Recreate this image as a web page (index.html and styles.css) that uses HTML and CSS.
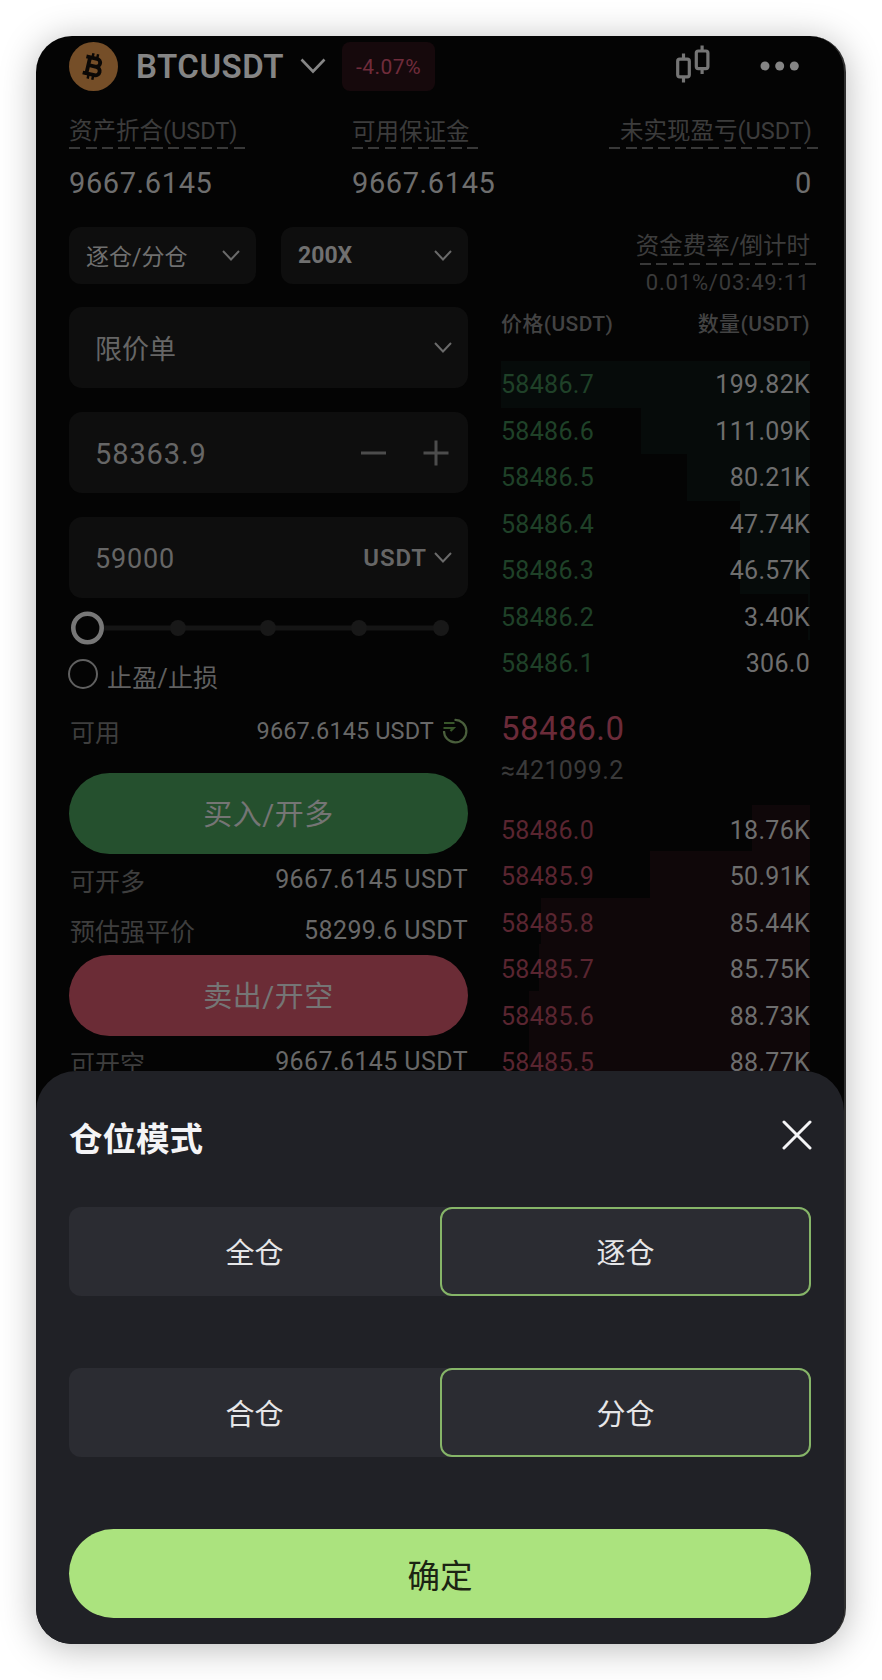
FILE: index.html
```html
<!DOCTYPE html>
<html lang="zh-CN">
<head>
    <meta charset="UTF-8">
    <meta name="viewport" content="width=device-width, initial-scale=1.0">
    <title>BTCUSDT - 仓位模式</title>
    <link rel="stylesheet" href="styles.css">
</head>
<body>
<div class="phone">

    <!-- 交易页面（变暗） -->
    <div class="trade">
        <div class="header">
            <svg class="coin" viewBox="0 0 48 48">
                <circle cx="24" cy="24" r="24" fill="#754e28"/>
                <g transform="rotate(13 24 24) translate(2 1.500) scale(.93)" fill="none" stroke="#0b0806" stroke-width="4">
                    <path d="M18 15.500V33M14 15.500h11.500a4.200 4.200 0 0 1 0 8.400H18M25.500 23.900h1.200a4.500 4.500 0 0 1 0 9H14"/>
                    <path d="M20.500 10.500v5M25.500 10.500v5M20.500 33v5M25.500 33v5" stroke-width="2.600"/>
                </g>
            </svg>
            <span class="pair">BTCUSDT</span>
            <svg class="pair-arrow" viewBox="0 0 26 16"><path d="M1.500 1.500L13 13.500L24.500 1.500"/></svg>
            <span class="change">-4.07%</span>
            <svg class="candle" viewBox="0 0 36 40">
                <rect x="2.700" y="14.200" width="11.600" height="17.600" rx="2"/>
                <rect x="21.300" y="6" width="11.600" height="17.600" rx="2"/>
                <path d="M8.500 8.500v5M8.500 32.500v5M27.100 .5v5M27.100 24v5"/>
            </svg>
            <svg class="more" viewBox="0 0 40 10">
                <circle cx="5" cy="5" r="4.500"/><circle cx="19.700" cy="5" r="4.500"/><circle cx="34.300" cy="5" r="4.500"/>
            </svg>
        </div>

        <div class="stats">
            <div class="stat">
                <div class="label dash">资产折合(USDT)</div>
                <div class="value">9667.6145</div>
            </div>
            <div class="stat stat-mid">
                <div class="label dash">可用保证金</div>
                <div class="value">9667.6145</div>
            </div>
            <div class="stat stat-right">
                <div class="label dash">未实现盈亏(USDT)</div>
                <div class="value">0</div>
            </div>
        </div>

        <div class="columns">
            <!-- 下单区 -->
            <div class="order">
                <div class="selects">
                    <div class="select"><span>逐仓/分仓</span><svg class="arrow" viewBox="0 0 18 11"><path d="M1 1l8 8.500L17 1"/></svg></div>
                    <div class="select"><b>200X</b><svg class="arrow" viewBox="0 0 18 11"><path d="M1 1l8 8.500L17 1"/></svg></div>
                </div>
                <div class="field">
                    <span class="type">限价单</span>
                    <svg class="arrow" viewBox="0 0 18 11"><path d="M1 1l8 8.500L17 1"/></svg>
                </div>
                <div class="field">
                    <span class="price">58363.9</span>
                    <svg class="step" viewBox="0 0 88 26"><path d="M0 13h25M62.500 13h25M75 .5v25"/></svg>
                </div>
                <div class="field">
                    <span class="amount">59000</span>
                    <b class="unit">USDT</b>
                    <svg class="arrow" viewBox="0 0 18 11"><path d="M1 1l8 8.500L17 1"/></svg>
                </div>

                <svg class="slider" viewBox="0 0 398 36">
                    <path d="M35 18h337" stroke="#151515" stroke-width="5"/>
                    <g fill="#181818">
                        <circle cx="109" cy="18" r="8"/><circle cx="199" cy="18" r="8"/>
                        <circle cx="290" cy="18" r="8"/><circle cx="372" cy="18" r="8"/>
                    </g>
                    <circle cx="18.500" cy="18" r="14.200" fill="none" stroke="#777" stroke-width="4.600"/>
                </svg>

                <div class="tpsl"><i class="radio"></i><span>止盈/止损</span></div>

                <div class="info info-avail">
                    <span class="name">可用</span>
                    <span class="num">9667.6145 USDT</span>
                    <svg class="transfer" viewBox="0 0 26 26">
                        <path d="M12.500 2a11.200 11.200 0 1 1-10.500 11" stroke="#4a5f3c"/>
                        <path d="M2 5h10.500M1.500 10h10L8.500 13" stroke="#38562a"/>
                    </svg>
                </div>
                <div class="btn buy">买入/开多</div>
                <div class="info"><span class="name">可开多</span><span class="num">9667.6145 USDT</span></div>
                <div class="info info-liq"><span class="name">预估强平价</span><span class="num">58299.6 USDT</span></div>
                <div class="btn sell">卖出/开空</div>
                <div class="info"><span class="name">可开空</span><span class="num">9667.6145 USDT</span></div>
            </div>

            <!-- 盘口 -->
            <div class="book">
                <div class="rate">
                    <div class="label dash">资金费率/倒计时</div>
                    <div class="countdown">0.01%/03:49:11</div>
                </div>
                <div class="book-head"><span>价格(USDT)</span><span>数量(USDT)</span></div>
                <div class="rows green">
                    <div class="row" style="--w: 309px"><span>58486.7</span><em>199.82K</em></div>
                    <div class="row" style="--w: 169px"><span>58486.6</span><em>111.09K</em></div>
                    <div class="row" style="--w: 123px"><span>58486.5</span><em>80.21K</em></div>
                    <div class="row" style="--w: 70px"><span>58486.4</span><em>47.74K</em></div>
                    <div class="row" style="--w: 70px"><span>58486.3</span><em>46.57K</em></div>
                    <div class="row" style="--w: 2px"><span>58486.2</span><em>3.40K</em></div>
                    <div class="row" style="--w: 0px"><span>58486.1</span><em>306.0</em></div>
                </div>
                <div class="last">58486.0</div>
                <div class="cny">≈421099.2</div>
                <div class="rows red">
                    <div class="row" style="--w: 58px"><span>58486.0</span><em>18.76K</em></div>
                    <div class="row" style="--w: 160px"><span>58485.9</span><em>50.91K</em></div>
                    <div class="row" style="--w: 269px"><span>58485.8</span><em>85.44K</em></div>
                    <div class="row" style="--w: 271px"><span>58485.7</span><em>85.75K</em></div>
                    <div class="row" style="--w: 281px"><span>58485.6</span><em>88.73K</em></div>
                    <div class="row" style="--w: 281px"><span>58485.5</span><em>88.77K</em></div>
                </div>
            </div>
        </div>
    </div>

    <!-- 仓位模式弹窗 -->
    <div class="sheet">
        <div class="sheet-head">
            <h2>仓位模式</h2>
            <svg class="close" viewBox="0 0 30 30"><path d="M2 2l26 26M28 2L2 28"/></svg>
        </div>
        <div class="segment"><div class="option">全仓</div><div class="option active">逐仓</div></div>
        <div class="segment"><div class="option">合仓</div><div class="option active">分仓</div></div>
        <div class="confirm">确定</div>
    </div>

</div>
</body>
</html>
```
FILE: styles.css
```css
* {
    box-sizing: border-box;
}

body {
    margin: 0;
    padding: 36px;
    background: #fff;
    font-family: Roboto, "Noto Sans CJK SC", sans-serif;
}

svg {
    display: block;
    flex-shrink: 0;
    fill: none;
}

.phone {
    width: 810px;
    height: 1608px;
    border-right: 2px solid #303030;
    border-radius: 36px;
    background: #040404;
    overflow: hidden;
    box-shadow: 0 4px 36px rgba(0, 0, 0, 0.28);
}

/* 交易页面 */
.trade {
    height: 1035px;
    padding: 0 34px 0 33px;
    overflow: hidden;
    color: #707070;
}

.header {
    display: flex;
    align-items: center;
    height: 60px;
}

.coin {
    width: 49px;
    height: 49px;
}

.pair {
    width: 164px;
    margin-left: 18px;
    font-size: 33px;
    font-weight: 600;
    letter-spacing: 0.5px;
    color: #858585;
}

.pair-arrow {
    width: 26px;
    height: 16px;
    stroke: #858585;
    stroke-width: 2.6;
}

.change {
    width: 93px;
    margin-left: 16px;
    border-radius: 8px;
    background: #16090c;
    font-size: 21px;
    line-height: 48px;
    padding-top: 1px;
    text-align: center;
    letter-spacing: 0.5px;
    color: #702c3b;
}

.candle {
    width: 36px;
    height: 40px;
    margin: -2px 49px 0 auto;
    stroke: #757575;
    stroke-width: 3.2;
}

.more {
    width: 40px;
    height: 10px;
    margin-right: 10px;
    fill: #858585;
}

.stats {
    display: flex;
    height: 131px;
    padding-top: 19px;
}

.stat {
    flex-shrink: 0;
    width: 283px;
}

.stat-right {
    width: 177px;
}

.label {
    height: 34px;
    font-size: 23.5px;
    line-height: 32px;
    white-space: nowrap;
    color: #3c3c3c;
}

/* 虚线下划线 */
.dash {
    width: 177px;
    background: repeating-linear-gradient(to right, #383838 0 11px, transparent 11px 16.500px) left bottom / 100% 2px no-repeat;
}

.stat-mid .dash {
    width: 126px;
    padding-top: 1px;
}

.stat-right .dash {
    width: 210px;
    margin-left: -26px;
    padding-right: 7px;
    text-align: right;
}

.value {
    margin-top: 16px;
    font-size: 29px;
    line-height: 36px;
    letter-spacing: 0.6px;
    color: #6e6e6e;
}

.stat-right .value {
    text-align: right;
}

.columns {
    display: flex;
    justify-content: space-between;
}

/* 下单区 */
.order {
    width: 399px;
}

.selects {
    display: flex;
    justify-content: space-between;
    margin-bottom: 23px;
}

.select {
    display: flex;
    align-items: center;
    justify-content: space-between;
    width: 187px;
    height: 57px;
    padding: 0 16px 0 17px;
    border-radius: 12px;
    background: #0e0e0e;
    font-size: 23px;
}

.select span {
    margin-top: -2px;
}

.arrow {
    width: 18px;
    height: 11px;
    stroke: #6a6a6a;
    stroke-width: 2;
}

.field {
    display: flex;
    align-items: center;
    height: 81px;
    margin-bottom: 24px;
    padding: 0 16px 0 26px;
    border-radius: 13px;
    background: #0e0e0e;
    color: #666;
}

.field span {
    flex: 1;
}

.type {
    font-size: 27px;
}

.price {
    padding-top: 2px;
    font-size: 29px;
    letter-spacing: 0.9px;
}

.amount {
    padding-top: 2px;
    font-size: 27px;
    letter-spacing: 0.8px;
}

.unit {
    margin-right: 7px;
    font-size: 24px;
    font-weight: 600;
    letter-spacing: 0.9px;
}

.step {
    width: 88px;
    height: 26px;
    margin-right: 3px;
    stroke: #4c4c4c;
    stroke-width: 3;
}

.slider {
    width: 398px;
    height: 36px;
    margin-top: -12px;
}

.tpsl {
    display: flex;
    align-items: center;
    height: 60px;
    font-size: 25px;
    letter-spacing: 0.2px;
    color: #606060;
}

.radio {
    width: 30px;
    height: 30px;
    margin: -4px 9px 0 -1px;
    border: 2px solid #606060;
    border-radius: 50%;
}

.info {
    display: flex;
    justify-content: space-between;
    align-items: center;
    height: 51px;
    font-size: 25px;
}

.name {
    flex: 1;
    padding-left: 1px;
    font-size: 25px;
    color: #3e3e3e;
}

.num {
    letter-spacing: 0.4px;
    color: #686868;
}

.info-avail {
    height: 67px;
    padding-bottom: 17px;
}

.info-liq {
    height: 50px;
}

.info-avail .num {
    font-size: 23.500px;
    letter-spacing: 0.1px;
}

.transfer {
    width: 26px;
    height: 26px;
    margin-left: 8px;
    stroke-width: 2.2;
}

.btn {
    height: 81px;
    border-radius: 41px;
    font-size: 29px;
    line-height: 85px;
    text-align: center;
    letter-spacing: 0.5px;
    color: #757575;
}

.buy {
    background: #25502e;
}

.sell {
    background: #6b2c36;
}

/* 盘口 */
.book {
    width: 309px;
}

.rate {
    height: 77px;
    text-align: right;
}

.rate .label {
    height: 38px;
    margin-left: 139px;
    padding-right: 7px;
    line-height: 38px;
    direction: rtl;
}

.countdown {
    font-size: 22px;
    line-height: 36px;
    letter-spacing: 0.8px;
    color: #3a3a3a;
}

.book-head {
    display: flex;
    justify-content: space-between;
    height: 57px;
    font-size: 21px;
    font-weight: 500;
    line-height: 41px;
    letter-spacing: 0.4px;
    color: #434343;
}

.row {
    display: flex;
    justify-content: space-between;
    height: 46.500px;
    font-size: 25px;
    line-height: 47px;
    letter-spacing: 0.3px;
    background: linear-gradient(var(--bar), var(--bar)) right top / var(--w) 100% no-repeat;
}

.row em {
    font-style: normal;
    color: #6e6e6e;
}

.green {
    --bar: #060b0a;
    color: #1f4128;
}

.red {
    --bar: #0f0709;
    color: #5a2530;
}

.red .row {
    line-height: 52px;
}

.last {
    margin-top: 20px;
    font-size: 33px;
    line-height: 44px;
    letter-spacing: 0.5px;
    color: #6b2b39;
}

.cny {
    height: 54px;
    font-size: 25px;
    line-height: 40px;
    letter-spacing: 0.4px;
    color: #3a3a3a;
}

/* 弹窗 */
.sheet {
    height: 573px;
    padding: 0 33px;
    border-radius: 40px 40px 0 0;
    background: #202126;
    color: #e6e6e8;
}

.sheet-head {
    display: flex;
    justify-content: space-between;
    align-items: center;
    height: 136px;
    padding-bottom: 5px;
}

.sheet-head h2 {
    margin: 0;
    font-size: 33.500px;
    font-weight: 700;
    color: #f4f4f6;
}

.close {
    width: 30px;
    height: 30px;
    margin: 0 -1px 3px 0;
    stroke: #f4f4f6;
    stroke-width: 3;
    stroke-linecap: round;
}

.segment {
    display: flex;
    height: 89px;
    margin-bottom: 72px;
    border-radius: 12px;
    background: #2b2c32;
}

.option {
    width: 50%;
    font-size: 29px;
    line-height: 94px;
    text-align: center;
}

.option.active {
    border: 2px solid #86b568;
    border-radius: 12px;
    line-height: 90px;
}

.confirm {
    height: 89px;
    border-radius: 45px;
    background: #abe37e;
    font-size: 32.500px;
    line-height: 96px;
    text-align: center;
    color: #1b2413;
}
```
